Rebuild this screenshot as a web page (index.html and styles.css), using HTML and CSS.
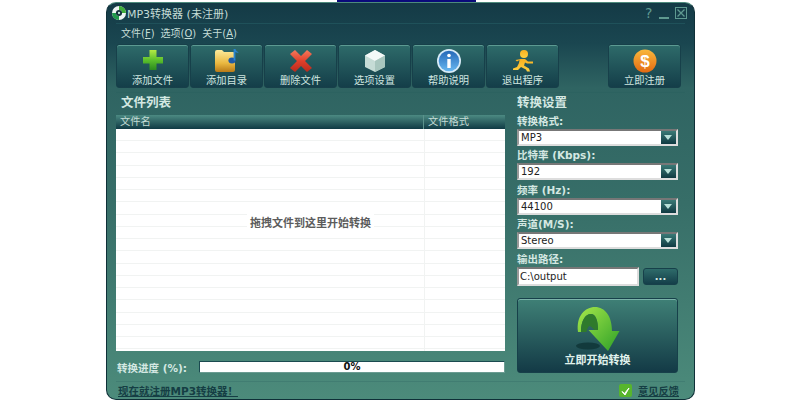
FILE: index.html
```html
<!DOCTYPE html>
<html lang="zh">
<head>
<meta charset="utf-8">
<title>MP3转换器</title>
<link rel="stylesheet" href="styles.css">
</head>
<body>
<div class="topstrip"></div>
<div class="window">
  <div class="titlebar">
    <svg class="logo" width="14" height="14" viewBox="0 0 16 16"><circle cx="8" cy="8" r="8" fill="#eef5f3"/><path d="M8 0a8 8 0 0 1 8 8h-4.500A3.500 3.500 0 0 0 8 4.500Z" fill="#3fae3a"/><path d="M8 16a8 8 0 0 1-8-8h4.500A3.500 3.500 0 0 0 8 11.500Z" fill="#1f9a4a"/><circle cx="8" cy="8" r="3.500" fill="#12303a"/><circle cx="8" cy="8" r="1.300" fill="#bfe8dc"/></svg>
    <span class="apptitle">MP3转换器 (未注册)</span>
    <div class="winctl">
      <span class="help">?</span>
      <span class="min"></span>
      <svg width="12" height="12" viewBox="0 0 12 12"><rect x=".5" y=".5" width="11" height="11" fill="none" stroke="#5f9a90"/><path d="M2.500 2.500l7 7M9.500 2.500l-7 7" stroke="#5f9a90" stroke-width="1.300"/></svg>
    </div>
  </div>
  <div class="menubar"><span>文件(<u>F</u>)</span><span>选项(<u>O</u>)</span><span>关于(<u>A</u>)</span></div>
  <div class="toolbar">
    <div class="tool"><svg width="24" height="24" viewBox="0 0 24 24"><defs><linearGradient id="g1" x1="0" y1="0" x2="0" y2="1"><stop offset="0" stop-color="#b4ea44"/><stop offset=".5" stop-color="#5cc02c"/><stop offset="1" stop-color="#2a8a1e"/></linearGradient></defs><path d="M8.500 1h7v7H22v6.500h-6.500V21h-7v-6.500H2V8h6.500Z" fill="url(#g1)"/></svg><span>添加文件</span></div>
    <div class="tool"><svg width="24" height="24" viewBox="0 0 24 24"><defs><linearGradient id="g2" x1="0" y1="0" x2="0" y2="1"><stop offset="0" stop-color="#fdeb9c"/><stop offset=".6" stop-color="#eab840"/><stop offset="1" stop-color="#b87a18"/></linearGradient></defs><path d="M0 3q0-2 2-2h5l2 2h9q2 0 2 2v16q0 2-2 2H2q-2 0-2-2Z" fill="url(#g2)"/><ellipse cx="17" cy="11.500" rx="3.600" ry="3" fill="#1f5aa6"/><path d="M18.600 11.500V0h1.800q.6 2.500 3.400 3.500-1.800.5-3.400-.5v8.500Z" fill="#2a84d0"/></svg><span>添加目录</span></div>
    <div class="tool"><svg width="24" height="24" viewBox="0 0 24 24"><defs><linearGradient id="g6" x1="0" y1="0" x2="0" y2="1"><stop offset="0" stop-color="#f47a5c"/><stop offset=".5" stop-color="#e0402c"/><stop offset="1" stop-color="#b82a1c"/></linearGradient></defs><path d="M6 1l6 6 6-6 5 4-7 7 7 7-5 4-6-6-6 6-5-4 7-7-7-7Z" fill="url(#g6)"/></svg><span>删除文件</span></div>
    <div class="tool"><svg width="24" height="24" viewBox="0 0 24 24"><path d="M12 1l10 5.500v11.500L12 23 2 18V6.500Z" fill="#c6dcd6"/><path d="M12 1l10 5.500L12 12 2 6.500Z" fill="#f4f9f8"/><path d="M12 12l10-5.500V18L12 23Z" fill="#a8c6be"/></svg><span>选项设置</span></div>
    <div class="tool"><svg width="24" height="24" viewBox="0 0 24 24"><defs><linearGradient id="g3" x1="0" y1="0" x2="0" y2="1"><stop offset="0" stop-color="#2468b8"/><stop offset="1" stop-color="#68b8f0"/></linearGradient></defs><circle cx="12" cy="12" r="12" fill="#d8ecf8"/><circle cx="12" cy="12" r="10.300" fill="url(#g3)"/><circle cx="12" cy="6.500" r="1.800" fill="#fff"/><rect x="10.300" y="10" width="3.400" height="9" fill="#fff"/></svg><span>帮助说明</span></div>
    <div class="tool"><svg width="24" height="24" viewBox="0 0 24 24"><defs><linearGradient id="g7" x1="0" y1="0" x2="0" y2="1"><stop offset="0" stop-color="#f9b020"/><stop offset="1" stop-color="#fdd040"/></linearGradient></defs><circle cx="13" cy="5" r="4" fill="url(#g7)"/><path d="M10 10h4l3 2.500h5v2h-6l-2-1-1 3 5 3 1 3h-3l-1-2-5-2.500-3 3H2v-1.500l4-1.500 2-4 .5-3-2.500 1.500-1.500-1.500Z" fill="url(#g7)"/></svg><span>退出程序</span></div>
    <div class="tool reg"><svg width="24" height="24" viewBox="0 0 24 24"><defs><linearGradient id="g4" x1="0" y1="0" x2="0" y2="1"><stop offset="0" stop-color="#f9b83c"/><stop offset="1" stop-color="#e36a12"/></linearGradient></defs><circle cx="12" cy="12" r="11.500" fill="url(#g4)"/><text x="12" y="18" class="dollar">$</text></svg><span>立即注册</span></div>
  </div>
  <div class="rule"></div>
  <div class="main">
    <div class="left">
      <h2>文件列表</h2>
      <div class="table">
        <div class="thead"><span class="c1">文件名</span><span class="c2">文件格式</span></div>
        <div class="tbody"><div class="vline"></div><div class="hint"><span>拖拽文件到这里开始转换</span></div></div>
      </div>
      <div class="progress"><label>转换进度 (%):</label><div class="bar">0%</div></div>
    </div>
    <div class="right">
      <h2>转换设置</h2>
      <label>转换格式:</label>
      <div class="select"><span>MP3</span><i></i></div>
      <label>比特率 (Kbps):</label>
      <div class="select"><span>192</span><i></i></div>
      <label>频率 (Hz):</label>
      <div class="select"><span>44100</span><i></i></div>
      <label>声道(M/S):</label>
      <div class="select"><span>Stereo</span><i></i></div>
      <label>输出路径:</label>
      <div class="pathrow"><div class="path">C:\output</div><div class="browse">...</div></div>
      <div class="start">
        <svg width="44" height="44" viewBox="0 0 44 44"><defs><linearGradient id="g5" x1="0" y1="0" x2="1" y2="1"><stop offset="0" stop-color="#a6e84a"/><stop offset="1" stop-color="#2ea028"/></linearGradient></defs><ellipse cx="12" cy="39" rx="12" ry="3.500" fill="#123a3c"/><path d="M2 25C0 9 9 0 19 0c10 0 17 9 17 24h7.500L32 44 12.500 23H22C22 14 20 7 15 7 9 7 5 14 5 25Z" fill="url(#g5)"/><path d="M5 25C5 14 9 7 15 7c5 0 7 7 7 16h-3.500l-3-3-2-1c-1 0-2.500 3-3 6Z" fill="#2f7a2c"/></svg>
        <span>立即开始转换</span>
      </div>
    </div>
  </div>
  <div class="rule bottomrule"></div>
  <div class="footer"><a class="reglink">现在就注册MP3转换器！</a><div class="feedback"><svg width="13" height="13" viewBox="0 0 13 13"><rect width="13" height="13" rx="2" fill="#57b52d"/><path d="M3 7.500l2.500 2L10 4 6 11Z" fill="#fff" stroke="#fff" stroke-linejoin="round"/></svg><a class="fb">意见反馈</a></div></div>
</div>
</body>
</html>
```
FILE: styles.css
```css
* { box-sizing: border-box; }
html, body { margin: 0; padding: 0; background: #fff; }
body { width: 800px; height: 400px; overflow: hidden; font-family: "DejaVu Sans", "Noto Sans CJK SC", sans-serif; font-size: 10px; color: #d4e8e2; }
.topstrip { width: 139px; height: 2px; margin-left: 337px; background: #0a0a7a; }
.window { width: 589px; height: 398px; margin-left: 106px; border-radius: 10px; border: 1px solid #0f3038; border-top-color: #4d8a7c; background: linear-gradient(#143a46 0, #1a4650 40px, #2f6462 85px, #376e68 200px, #4c8b7b 100%); padding: 0 9px; display: flex; flex-direction: column; }
.titlebar { height: 20px; display: flex; align-items: center; gap: 1px; margin: 0 -2px 0 -4px; font-size: 11px; flex: none; }
.apptitle { color: #c4dcd6; }
.logo { flex: none; }
.winctl { margin-left: auto; display: flex; align-items: center; gap: 6px; }
.help { color: #5f9a90; font-size: 14px; width: 8px; }
.min { width: 10px; height: 2px; background: #5f9a90; margin-top: 9px; }
.menubar { height: 17px; flex: none; display: flex; align-items: center; gap: 6px; padding-left: 5px; border-top: 1px solid #1f515a; color: #c4dcd6; }
.toolbar { display: flex; height: 44px; flex: none; margin-top: 4px; gap: 1px; }
.tool { width: 73px; height: 44px; border: 1px solid #17404a; border-radius: 3px; background: linear-gradient(#2e6b6a, #143e49); box-shadow: inset 0 1px 0 #5c9a92; display: flex; flex-direction: column; align-items: center; padding-top: 4px; color: #d0e6e0; font-size: 10.25px; line-height: 14px; }
.tool svg { flex: none; width: 24px; height: 24px; }
.tool.reg { margin-left: auto; margin-right: 4px; }
.dollar { font: bold 17px "Liberation Sans", sans-serif; fill: #fff; text-anchor: middle; }
.rule { height: 1px; background: #2c6260; margin-top: 4px; flex: none; }
.main { display: flex; gap: 12px; height: 280px; flex: none; }
h2 { margin: 0; font-size: 12.5px; font-weight: bold; color: #d4e8e2; height: 22px; line-height: 20px; flex: none; }
.left { width: 389px; display: flex; flex-direction: column; }
.left h2 { padding-left: 5px; }
.table { width: 389px; height: 236px; flex: none; background: #fff; }
.thead { height: 14px; display: flex; background: linear-gradient(#4c8a82, #0f3a44); color: #c4dcd6; line-height: 13px; font-size: 10.25px; }
.c1 { width: 308px; padding-left: 4px; border-right: 1px solid #5b928c; }
.c2 { padding-left: 4px; }
.tbody { position: relative; height: 222px; background: repeating-linear-gradient(#fff 0, #fff 11.25px, #f1f3f2 11.25px, #f1f3f2 12.25px); display: flex; align-items: center; justify-content: center; padding-bottom: 36px; }
.vline { position: absolute; left: 308px; top: 0; bottom: 0; width: 1px; background: #f1f3f2; }
.hint { position: relative; color: #5c5c5c; font-weight: bold; font-size: 11px; background: #fff; padding: 0 3px; }
.progress { display: flex; align-items: center; justify-content: space-between; height: 12px; flex: none; margin-top: 10px; font-weight: bold; color: #d4e8e2; }
.progress label { padding-left: 1px; font-size: 10.5px; }
.bar { width: 306px; height: 12px; background: #fff; border: 1px solid #1a4a50; border-right-color: #6a9c92; border-bottom-color: #6a9c92; color: #111; font-size: 10px; text-align: center; line-height: 10px; }
.right { width: 161px; display: flex; flex-direction: column; }
.right label { font-weight: bold; font-size: 10.5px; height: 14px; line-height: 12px; color: #d4e8e2; flex: none; white-space: nowrap; }
.select { width: 161px; height: 17px; flex: none; background: #fff; border: 2px solid #888; border-color: #777 #ddd #ddd #999; display: flex; align-items: center; justify-content: space-between; padding-left: 2px; color: #222; margin-bottom: 3.4px; }
.select i { width: 15px; height: 13px; background: linear-gradient(#3a7a76, #103a42); position: relative; }
.select i::after { content: ""; position: absolute; left: 3px; top: 4px; border: 4.5px solid transparent; border-top: 5px solid #b8e0d8; border-bottom: 0; }
.pathrow { display: flex; gap: 4px; align-items: center; flex: none; }
.path { width: 122px; height: 19px; background: #fff; border: 2px solid #888; border-color: #777 #ddd #ddd #999; color: #222; padding-left: 1px; line-height: 15px; }
.browse { width: 35px; height: 17px; border: 1px solid #17404a; border-radius: 3px; background: linear-gradient(#2e6b6a, #143e49); text-align: center; font-weight: bold; line-height: 15px; }
.start { width: 161px; height: 75px; flex: none; margin-top: 12px; border: 1px solid #17404a; border-radius: 3px; background: linear-gradient(#3f8076, #133a46); box-shadow: inset 0 1px 0 #7cb4aa; display: flex; flex-direction: column; align-items: center; padding-top: 8px; gap: 3px; font-weight: bold; font-size: 11px; line-height: 14px; color: #e0f2ec; }
.start svg { flex: none; }
.bottomrule { margin-top: 8px; background: #417d72; }
.footer { flex: 1; display: flex; justify-content: space-between; align-items: center; font-weight: bold; font-size: 11px; color: #153e44; padding: 0 6px 0 2px; }
.footer a { text-decoration: underline; }
.footer a.reglink { font-size: 10.5px; }
.footer a.fb { font-size: 10.25px; }
.feedback { display: flex; align-items: center; gap: 6px; }
```
